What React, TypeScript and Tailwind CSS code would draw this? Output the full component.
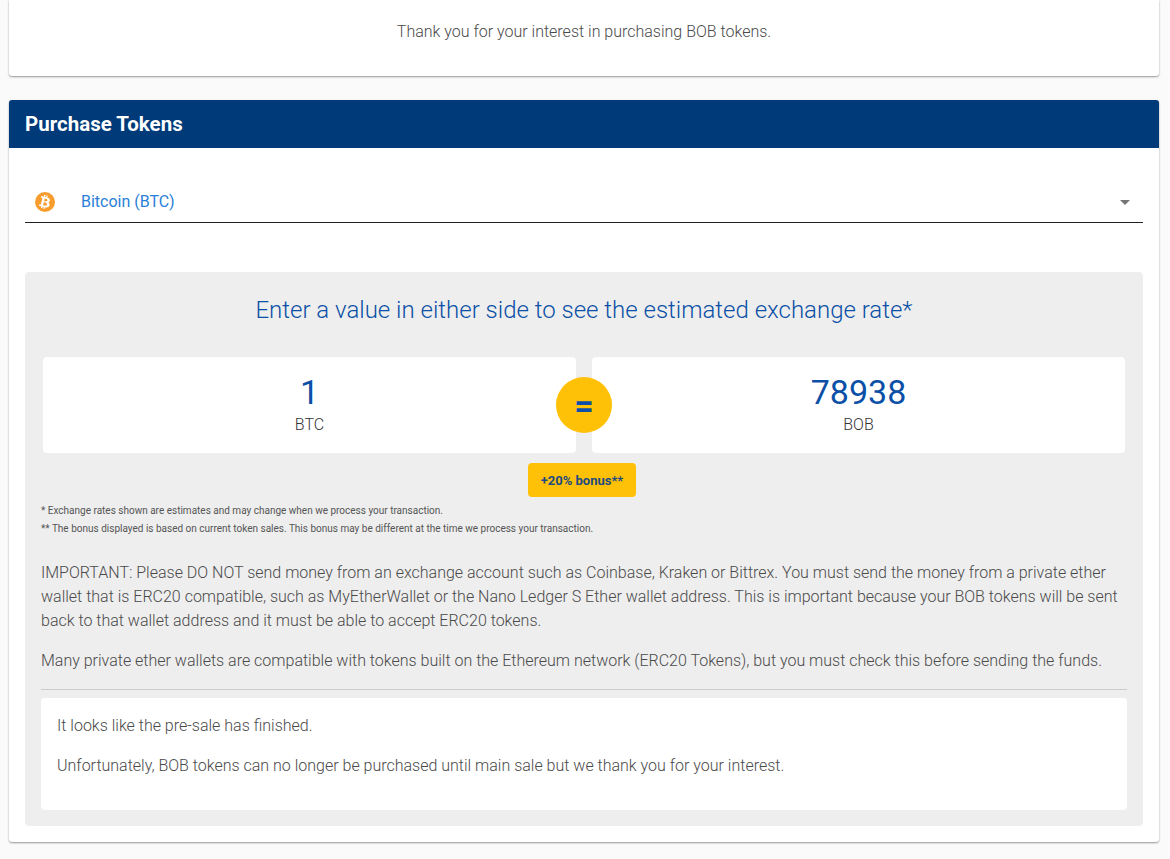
import { FaBtc } from 'react-icons/fa'

function BitcoinIcon() {
  return (
    <div className="flex h-5 w-5 shrink-0 items-center justify-center rounded-full bg-[#f89c2e] text-white">
      <FaBtc size={14} className="rotate-[14deg]" />
    </div>
  )
}

interface RateBoxProps {
  value: string
  unit: string
}
function RateBox(props: RateBoxProps) {
  return (
    <div className="h-24 w-[533px] rounded-sm bg-white text-center">
      <div className="mt-[14px] text-[34px] leading-[42px] text-[#0b50a6]">{props.value}</div>
      <div className="text-base leading-[24px] font-light text-[#333]">{props.unit}</div>
    </div>
  )
}

export default function App() {
  return (
    <div className="min-h-[859px] bg-[#fafafa] pr-[11px] pl-[9px] font-['Roboto',sans-serif] text-[#4a4a4a]">
      <div className="h-[76px] rounded-b-[3px] bg-white pt-5 text-center text-base leading-6 font-light shadow-[0_1px_2px_rgba(0,0,0,0.4)]">
        Thank you for your interest in purchasing BOB tokens.
      </div>

      <div className="mt-6 h-[742px] rounded-[3px] bg-white shadow-[0_1px_2px_rgba(0,0,0,0.4)]">
        <div className="h-12 rounded-t-[3px] bg-[#003a78] px-4 text-[20.5px] leading-12 font-bold text-white">
          Purchase Tokens
        </div>

        <div className="px-4">
          <div className="mt-7 flex h-[47px] items-center border-b border-[#222] pt-[6px] pl-[10px]">
            <BitcoinIcon />
            <span className="ml-[26px] grow text-base text-[#2a80d8]">Bitcoin (BTC)</span>
            <span className="mr-[13px] h-0 w-0 border-x-[5px] border-t-[5px] border-x-transparent border-t-[#757575]" />
          </div>

          <div className="mt-[49px] h-[554px] rounded-sm bg-[#eee] px-4">
            <h2 className="pt-[22px] text-center text-2xl leading-[32px] font-light text-[#0b50a6]">
              Enter a value in either side to see the estimated exchange rate*
            </h2>

            <div className="relative mx-[2px] mt-[31px] flex justify-between">
              <RateBox value="1" unit="BTC" />
              <RateBox value="78938" unit="BOB" />
              <div className="absolute top-5 left-[513px] flex h-14 w-14 items-center justify-center rounded-full bg-[#ffc107] text-[34px] leading-none font-bold text-[#0b50a6]">
                =
              </div>
            </div>

            <div className="mt-[10px] flex justify-center">
              <div className="ml-[-4px] flex h-[34px] w-[108px] items-center justify-center rounded-sm bg-[#ffc107] pt-[2px] text-[13px] font-bold text-[#1d4a80]">
                +20% bonus**
              </div>
            </div>

            <div className="mt-[5px] text-[10px] leading-[18px] text-[#555]">
              <div>* Exchange rates shown are estimates and may change when we process your transaction.</div>
              <div>** The bonus displayed is based on current token sales. This bonus may be different at the time we process your transaction.</div>
            </div>

            <p className="mt-[23px] text-base leading-6 font-light">
              IMPORTANT: Please DO NOT send money from an exchange account such as Coinbase, Kraken or Bittrex. You must send the money from a private ether wallet that is ERC20 compatible, such as MyEtherWallet or the Nano Ledger S Ether wallet address. This is important because your BOB tokens will be sent back to that wallet address and it must be able to accept ERC20 tokens.
            </p>
            <p className="mt-4 text-base leading-6 font-light">
              Many private ether wallets are compatible with tokens built on the Ethereum network (ERC20 Tokens), but you must check this before sending the funds.
            </p>

            <div className="mt-4 border-t border-[#ccc]" />

            <div className="mt-2 h-28 rounded-sm bg-white px-4 pt-4 text-base leading-6 font-light">
              <p>It looks like the pre-sale has finished.</p>
              <p className="mt-4">Unfortunately, BOB tokens can no longer be purchased until main sale but we thank you for your interest.</p>
            </div>
          </div>
        </div>
      </div>
    </div>
  )
}
